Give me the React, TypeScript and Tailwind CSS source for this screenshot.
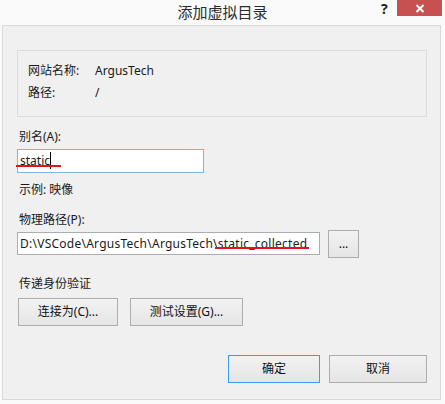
const font = "font-['Segoe_UI','Noto_Sans','Noto_Sans_CJK_SC',sans-serif]";

const Btn = ({ label, w, primary }: { label: string; w: string; primary?: boolean }) => (
  <div
    className={`${w} h-[28px] flex items-center justify-center text-[12px] text-[#111] bg-gradient-to-b from-[#f2f2f2] to-[#e5e5e5] border ${
      primary ? "border-[#3c9cf0]" : "border-[#adadad]"
    }`}
  >
    {label}
  </div>
);

export default function App() {
  return (
    <div className={`w-[445px] h-[404px] bg-[#fafafa] text-[#1a1a1a] ${font} overflow-hidden`}>
      {/* title bar */}
      <div className="relative h-[25px] flex items-start justify-center">
        <span className="mt-[3px] text-[15px] leading-[18px] text-[#2b2b2b]">添加虚拟目录</span>
        <span className="absolute left-[381px] top-[1px] text-[14px] font-bold leading-[16px] text-[#222]">?</span>
        <div className="absolute left-[397px] top-0 w-[45px] h-[16px] bg-[#c75050] flex items-center justify-center">
          <svg width="10" height="9" viewBox="0 0 10 9">
            <path d="M1.5 1 L8.5 8 M8.5 1 L1.5 8" stroke="#fff" strokeWidth="2" />
          </svg>
        </div>
      </div>

      {/* body */}
      <div className="ml-[2px] w-[439px] h-[375px] border border-[#d9d9d9] bg-[#f0f0f0] pl-[14px] text-[12px]">
        <div className="mt-[24px] w-[410px] h-[67px] border border-[#dcdcdc] pt-[9px] pl-[10px]">
          <div className="flex h-[22px] items-center">
            <span className="w-[67px]">网站名称:</span>
            <span>ArgusTech</span>
          </div>
          <div className="flex h-[22px] items-center">
            <span className="w-[67px]">路径:</span>
            <span>/</span>
          </div>
        </div>

        <div className="mt-[12px] ml-[2px] h-[16px] leading-[16px]">别名(A):</div>
        <div className="relative mt-[4px] w-[187px] h-[24px] border border-[#7eb4ea] bg-white pl-[2px] flex items-center">
          <span>static</span>
          <div className="absolute left-[32px] top-[2px] w-px h-[17px] bg-black" />
          <div className="absolute left-[-2px] top-[15px] w-[45px] h-[2px] bg-[#e8101a]" />
        </div>

        <div className="mt-[9px] ml-[2px] h-[16px] leading-[16px]">示例: 映像</div>
        <div className="mt-[14px] ml-[2px] h-[16px] leading-[16px]">物理路径(P):</div>

        <div className="mt-[2px] flex items-start gap-[8px]">
          <div className="relative mt-[2px] w-[303px] h-[23px] border border-[#abadb3] bg-white pl-[2px] flex items-center whitespace-nowrap">
            <span className="tracking-[0.25px]">D:\VSCode\ArgusTech\ArgusTech\static_collected</span>
            <div className="absolute left-[197px] top-[14px] w-[94px] h-[2px] bg-[#e8101a]" />
          </div>
          <Btn label="..." w="w-[31px]" />
        </div>

        <div className="mt-[18px] ml-[2px] h-[16px] leading-[16px]">传递身份验证</div>
        <div className="mt-[6px] ml-[1px] flex gap-[12px]">
          <Btn label="连接为(C)..." w="w-[100px]" />
          <Btn label="测试设置(G)..." w="w-[113px]" />
        </div>

        <div className="mt-[29px] ml-[211px] flex gap-[9px]">
          <Btn label="确定" w="w-[92px]" primary />
          <Btn label="取消" w="w-[98px]" />
        </div>
      </div>
    </div>
  );
}
